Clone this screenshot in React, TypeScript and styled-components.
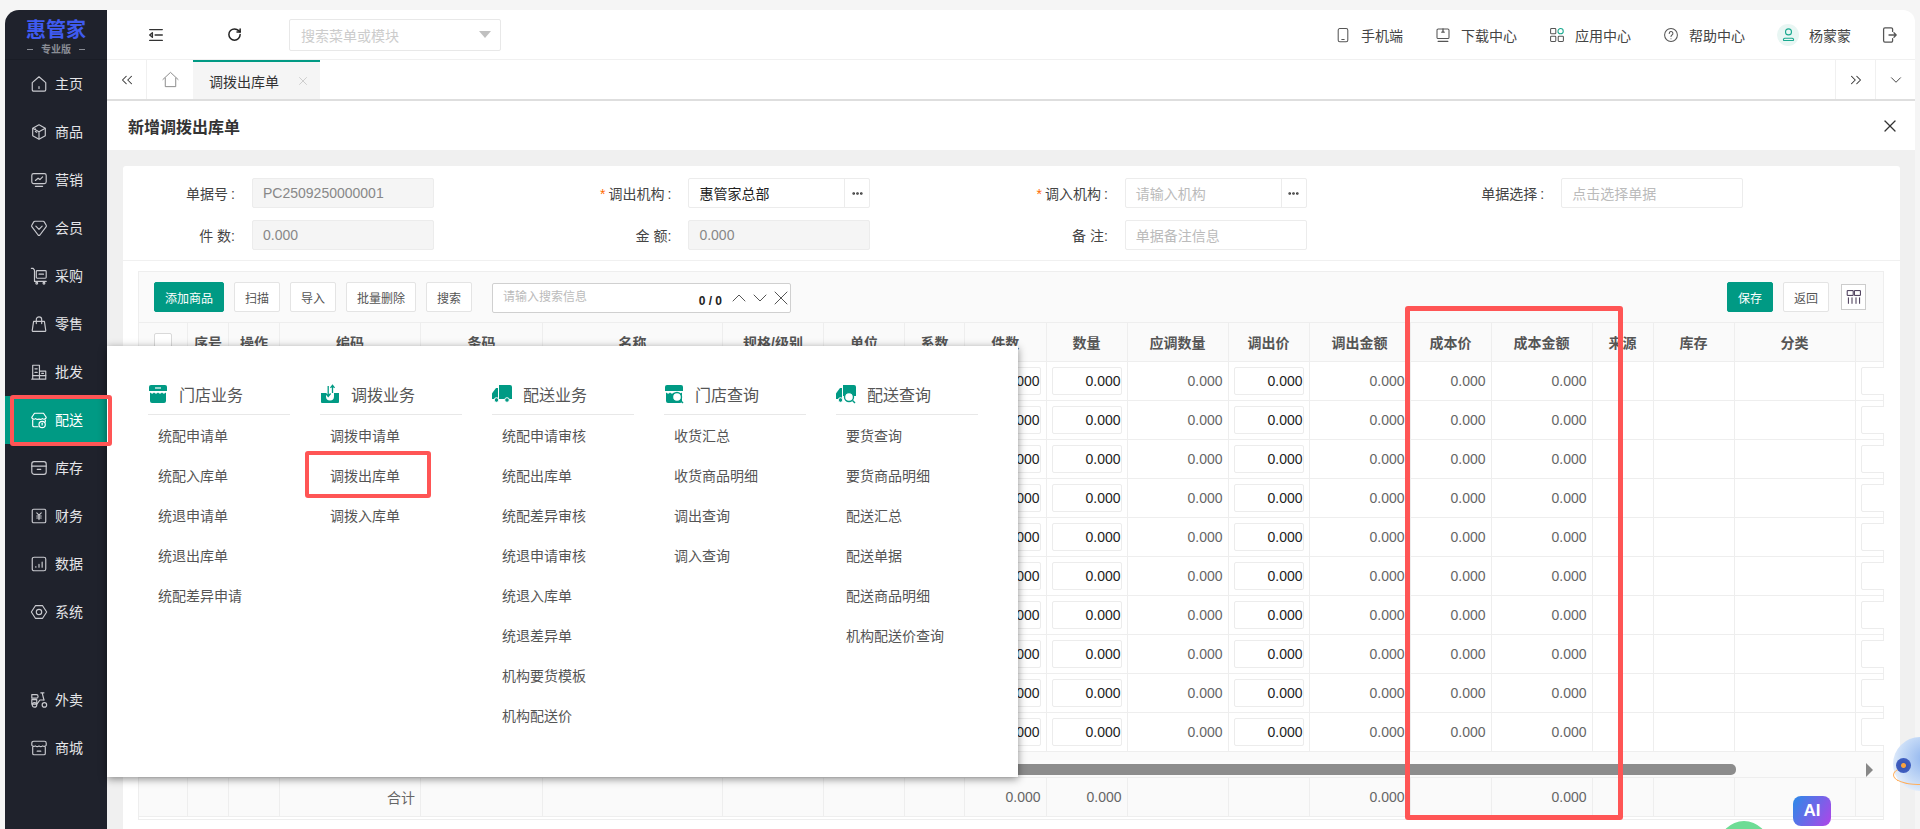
import { ReactNode } from "react";
import styled, { createGlobalStyle } from "styled-components";
import { ChevronDown, ChevronUp, ChevronsLeft, ChevronsRight, Ellipsis, RotateCw, X } from "lucide-react";

const TEAL = "#009a84";
const COLS =
  "49px 41px 51px 141px 122px 180px 101px 81px 60px 81.5px 81px 101px 81px 101px 81px 101px 61px 81px 121px 28px";

const GlobalStyle = createGlobalStyle`
  html, body { margin: 0; padding: 0; background: #f5f5f5; overflow: hidden; }
  * { box-sizing: border-box; }
  body { font-family: "Liberation Sans", "Noto Sans CJK SC", sans-serif; font-size: 14px; color: #555; }
`;

const Ico = ({ children, size = 18, color = "currentColor", width = 1.3 }: { children: ReactNode; size?: number; color?: string; width?: number }) => (
  <svg width={size} height={size} viewBox="0 0 20 20" fill="none" stroke={color} strokeWidth={width} strokeLinecap="round" strokeLinejoin="round">
    {children}
  </svg>
);

const navTop = [
  { label: "主页", icon: <><path d="M10 2l7.500 6.500v8a1.500 1.500 0 0 1-1.500 1.500H4a1.500 1.500 0 0 1-1.500-1.500v-8z" /><path d="M10 13v2" /></> },
  { label: "商品", icon: <><path d="M10 2l7 3.800v8.400l-7 3.800-7-3.800V5.800z" /><path d="M3.500 6L10 9.800 16.500 6M10 10v7.500M6 6.500v3l1.500.8" /></> },
  { label: "营销", icon: <><rect x="2" y="3" width="16" height="11" rx="2" /><path d="M6 10.500l3-2.500 2 1.500 3-3M6 17h8" /></> },
  { label: "会员", icon: <><path d="M5.500 2.500h9a1.500 1.500 0 0 1 1.300.7l2.200 3.800a1.500 1.500 0 0 1-.2 1.800L11 17.800a1.400 1.400 0 0 1-2 0L2.200 8.800A1.500 1.500 0 0 1 2 7l2.200-3.800a1.500 1.500 0 0 1 1.300-.7z" /><path d="M6.500 8L10 11.500 13.500 8" /></> },
  { label: "采购", icon: <><path d="M1.500 1.500h2l1.500 2v12.500h13" /><rect x="7" y="4" width="11" height="8.500" rx="1" /><path d="M10 8h5" /><circle cx="7.500" cy="18" r="1" /><circle cx="15.500" cy="18" r="1" /></> },
  { label: "零售", icon: <><path d="M4 7h12l1.500 10a1 1 0 0 1-1 1.200h-13a1 1 0 0 1-1-1.200z" /><path d="M7 9.500V5a3 3 0 0 1 6 0v4.500" /></> },
  { label: "批发", icon: <><path d="M3 18V2.500h7.500V18M10.500 9H17.500v9H2" /><path d="M5.500 6.500h2.500M5.500 10.500h2.500M3 14h14.500M13 11.500h2" /></> },
  { label: "配送", active: true, icon: <><path d="M5 2.500h10l3 4.500a2.600 2.600 0 0 1-4.300 1.500 3 3 0 0 1-3.700.3 3 3 0 0 1-3.700-.3A2.600 2.600 0 0 1 2 7z" /><path d="M3 10v6a1.500 1.500 0 0 0 1.500 1.500H9M17 10v2" /><circle cx="13.500" cy="15" r="3.500" /><path d="M13.500 13.500v2" /></> },
  { label: "库存", icon: <><rect x="2" y="3" width="16" height="14" rx="2.500" /><path d="M2 8h16M8 11.500h4" /></> },
  { label: "财务", icon: <><rect x="2.500" y="2.500" width="15" height="15" rx="1.500" /><path d="M7.500 6.500L10 9l2.500-2.500M10 9v5M7.500 10h5M7.500 12.200h5" /></> },
  { label: "数据", icon: <><rect x="2.500" y="2.500" width="15" height="15" rx="2" /><path d="M6.500 13.500v-.5M10 13.500v-3M13.500 13.500V8" /></> },
  { label: "系统", icon: <><path d="M6 3h8l4.500 7-4.500 7H6l-4.500-7z" /><circle cx="10" cy="10" r="3" /></> },
];

const navBottom = [
  { label: "外卖", icon: <><path d="M2 4h5a1.500 1.500 0 0 1 0 4H2zM2 9.500h5.500v5H2zM12 2h3.500M13.500 2l2 8" /><path d="M8 14l3-4h4.500" /><circle cx="5" cy="15.500" r="2.500" /><circle cx="16" cy="15.500" r="2.500" /></> },
  { label: "商城", icon: <><path d="M4 2.500h12a2 2 0 0 1 2 2V7a2.700 2.700 0 0 1-4 .6 3 3 0 0 1-4 0 3 3 0 0 1-4 0A2.700 2.700 0 0 1 2 7V4.500a2 2 0 0 1 2-2z" /><path d="M3 9v7a1.500 1.500 0 0 0 1.500 1.500h11A1.500 1.500 0 0 0 17 16V9M8 13.500h4" /></> },
];

const headerLinks = [
  { label: "手机端", icon: <><rect x="4" y="2" width="12" height="16.500" rx="2" /><path d="M8.500 15.500h3" /></> },
  { label: "下载中心", icon: <><rect x="2.500" y="2.500" width="15" height="12" rx="1.500" /><path d="M10 2.500v4M8.500 6.500h3M4 18h12" strokeWidth="1.600" /></> },
  { label: "应用中心", icon: <><rect x="2" y="2" width="6.500" height="6.500" rx="1" /><circle cx="14.500" cy="5.200" r="3.300" stroke="#19a98f" /><rect x="2" y="11.500" width="6.500" height="6.500" rx="1" /><rect x="11.500" y="11.500" width="6.500" height="6.500" rx="1" /></> },
  { label: "帮助中心", icon: <><circle cx="10" cy="10" r="8" /><path d="M7.800 8a2.300 2.300 0 1 1 3.400 2c-.8.500-1.200 1-1.200 2M10 14.600v.1" /></> },
];

const menus = [
  {
    title: "门店业务",
    icon: (
      <>
        <path d="M3 1h14a2 2 0 0 1 2 2v4H1V3a2 2 0 0 1 2-2z" />
        <path d="M2 8.500c1.500 1.500 3 1.500 4 0 1 1.500 3 1.500 4 0 1 1.500 3 1.500 4 0 1 1.500 2.500 1.500 4 0V17a2 2 0 0 1-2 2H4a2 2 0 0 1-2-2z" />
        <path d="M7 4h6" stroke="#fff" strokeWidth="1.200" />
      </>
    ),
    items: ["统配申请单", "统配入库单", "统退申请单", "统退出库单", "统配差异申请"],
  },
  {
    title: "调拨业务",
    icon: (
      <>
        <path d="M1 9h5v3.500a4 4 0 0 0 8 0V9h5v9a1 1 0 0 1-1 1H2a1 1 0 0 1-1-1z" />
        <path d="M8.200 11.500V2M5.800 9.500l2.400 3 2.400-3M12.500 9V1.500M10.500 3.800l2-2.600 2 2.600" fill="none" stroke={TEAL} strokeWidth="1.300" />
      </>
    ),
    items: ["调拨申请单", "调拨出库单", "调拨入库单"],
  },
  {
    title: "配送业务",
    icon: (
      <>
        <path d="M7 1h11a2 2 0 0 1 2 2v12H7zM1 8l3-4h2v11H0V9.500z" />
        <circle cx="4.500" cy="16" r="2.300" stroke="#fff" />
        <circle cx="15" cy="16" r="2.300" stroke="#fff" />
      </>
    ),
    items: ["统配申请审核", "统配出库单", "统配差异审核", "统退申请审核", "统退入库单", "统退差异单", "机构要货模板", "机构配送价"],
  },
  {
    title: "门店查询",
    icon: (
      <>
        <path d="M3 1h14a2 2 0 0 1 2 2v4H1V3a2 2 0 0 1 2-2z" />
        <path d="M2 8.500c1.500 1.500 3 1.500 4 0 1 1.500 3 1.500 4 0 1 1.500 3 1.500 4 0 1 1.500 2.500 1.500 4 0V17a2 2 0 0 1-2 2H4a2 2 0 0 1-2-2z" />
        <circle cx="13" cy="13" r="4.500" fill="#fff" stroke={TEAL} strokeWidth="1.400" />
        <path d="M16.500 16.500l2.500 2.500" stroke={TEAL} strokeWidth="1.400" />
      </>
    ),
    items: ["收货汇总", "收货商品明细", "调出查询", "调入查询"],
  },
  {
    title: "配送查询",
    icon: (
      <>
        <path d="M7 1h11a2 2 0 0 1 2 2v9H7zM1 8l3-4h2v11H0V9.500z" />
        <circle cx="4.500" cy="16" r="2.300" stroke="#fff" />
        <circle cx="13" cy="13" r="4.500" fill="#fff" stroke={TEAL} strokeWidth="1.400" />
        <path d="M16.500 16.500l2.500 2.500" stroke={TEAL} strokeWidth="1.400" />
      </>
    ),
    items: ["要货查询", "要货商品明细", "配送汇总", "配送单据", "配送商品明细", "机构配送价查询"],
  },
];

const columns = ["", "序号", "操作", "编码", "条码", "名称", "规格/级别", "单位", "系数", "件数", "数量", "应调数量", "调出价", "调出金额", "成本价", "成本金额", "来源", "库存", "分类", ""];
const inputCols = [9, 10, 12, 19];
const numberCols = [11, 13, 14, 15];
const totalCols = [9, 10, 13, 15];

export default function App() {
  return (
    <Page>
      <GlobalStyle />
      <Sidebar>
        <Logo>
          <LogoName>惠管家</LogoName>
          <LogoSub>专业版</LogoSub>
        </Logo>
        <NavGroup>
          {navTop.map((n) => (
            <NavItem key={n.label} $active={!!n.active}>
              <Ico size={18}>{n.icon}</Ico>
              <span>{n.label}</span>
            </NavItem>
          ))}
        </NavGroup>
        <NavGroup>
          {navBottom.map((n) => (
            <NavItem key={n.label}>
              <Ico size={18}>{n.icon}</Ico>
              <span>{n.label}</span>
            </NavItem>
          ))}
        </NavGroup>
      </Sidebar>

      <Main>
        <Header>
          <HeaderLeft>
            <IconSlot>
              <Ico size={18} color="#333" width={1.5}>
                <path d="M3 4h14M9 10h8M3 16h14M6 7.500L3 10l3 2.500z" />
              </Ico>
            </IconSlot>
            <IconSlot>
              <RotateCw size={15} color="#222" strokeWidth={2.4} />
            </IconSlot>
            <MenuSearch>
              搜索菜单或模块
              <Caret />
            </MenuSearch>
          </HeaderLeft>
          <HeaderRight>
            {headerLinks.map((h) => (
              <HeaderLink key={h.label}>
                <Ico size={16} color="#555">{h.icon}</Ico>
                {h.label}
              </HeaderLink>
            ))}
            <HeaderLink>
              <Avatar>
                <Ico size={15} color="#19a98f" width={1.4}>
                  <circle cx="10" cy="6.500" r="4" />
                  <path d="M3.500 18a2 2 0 0 1 2-3h9a2 2 0 0 1 2 3z" />
                </Ico>
              </Avatar>
              杨蒙蒙
            </HeaderLink>
            <Logout>
              <Ico size={18} color="#555" width={1.4}>
                <path d="M14 6V3.500A1.500 1.500 0 0 0 12.500 2h-7A1.500 1.500 0 0 0 4 3.500v13A1.500 1.500 0 0 0 5.500 18h7a1.500 1.500 0 0 0 1.500-1.500V14M10 10h8M15.500 7.500L18 10l-2.500 2.500" />
              </Ico>
            </Logout>
          </HeaderRight>
        </Header>

        <TabBar>
          <TabArrow>
            <ChevronsLeft size={18} color="#333" strokeWidth={1.4} />
          </TabArrow>
          <HomeTab>
            <Ico size={19} color="#888" width={1}>
              <path d="M2 10l8-7.500 8 7.500M4.500 8.500V17.500h11V8.500" />
            </Ico>
          </HomeTab>
          <ActiveTab>
            调拨出库单
            <X size={14} color="#c8c8c8" strokeWidth={1.5} />
          </ActiveTab>
          <TabSpacer />
          <TabEnd>
            <ChevronsRight size={18} color="#333" strokeWidth={1.4} />
          </TabEnd>
          <TabEnd>
            <ChevronDown size={18} color="#444" strokeWidth={1.3} />
          </TabEnd>
        </TabBar>

        <TitleBar>
          新增调拨出库单
          <X size={20} color="#333" strokeWidth={1.5} />
        </TitleBar>

        <Content>
          <Card>
            <FormGrid>
              <Field>
                <FieldLabel>单据号<Colon>:</Colon></FieldLabel>
                <TextBox $disabled>PC2509250000001</TextBox>
              </Field>
              <Field>
                <FieldLabel><Star>*</Star>调出机构<Colon>:</Colon></FieldLabel>
                <TextBox $dark>
                  惠管家总部
                  <MoreBtn><Ellipsis size={13} color="#333" strokeWidth={3} /></MoreBtn>
                </TextBox>
              </Field>
              <Field>
                <FieldLabel><Star>*</Star>调入机构<Colon>:</Colon></FieldLabel>
                <TextBox $hint>
                  请输入机构
                  <MoreBtn><Ellipsis size={13} color="#333" strokeWidth={3} /></MoreBtn>
                </TextBox>
              </Field>
              <Field>
                <FieldLabel>单据选择<Colon>:</Colon></FieldLabel>
                <TextBox $hint>点击选择单据</TextBox>
              </Field>
              <Field>
                <FieldLabel>件 数:</FieldLabel>
                <TextBox $disabled>0.000</TextBox>
              </Field>
              <Field>
                <FieldLabel>金 额:</FieldLabel>
                <TextBox $disabled>0.000</TextBox>
              </Field>
              <Field>
                <FieldLabel>备 注:</FieldLabel>
                <TextBox $hint>单据备注信息</TextBox>
              </Field>
            </FormGrid>

            <TableWrap>
              <Toolbar>
                <ToolGroup>
                  <ToolBtn $primary $w={70}>添加商品</ToolBtn>
                  <ToolBtn $w={46}>扫描</ToolBtn>
                  <ToolBtn $w={46}>导入</ToolBtn>
                  <ToolBtn $w={70}>批量删除</ToolBtn>
                  <ToolBtn $w={46}>搜索</ToolBtn>
                  <SearchBox>
                    <SearchHint>请输入搜索信息</SearchHint>
                    <SearchCount>0 / 0</SearchCount>
                    <ChevronUp size={24} color="#555" strokeWidth={1} />
                    <ChevronDown size={24} color="#555" strokeWidth={1} />
                    <X size={24} color="#555" strokeWidth={1} />
                  </SearchBox>
                </ToolGroup>
                <ToolGroup>
                  <ToolBtn $primary $w={46}>保存</ToolBtn>
                  <ToolBtn $w={46}>返回</ToolBtn>
                  <ColumnBtn>
                    <Ico size={16} color="#3a2a4a" width={1.2}>
                      <rect x="2" y="2" width="7" height="6" />
                      <rect x="11" y="2" width="7" height="6" />
                      <path d="M3 11v7M7.500 11v7M12.500 11v7M17 11v7" />
                    </Ico>
                  </ColumnBtn>
                </ToolGroup>
              </Toolbar>

              <HeadRow>
                {columns.map((c, i) => (
                  <HeadCell key={i}>{i === 0 ? <CheckBox /> : c}</HeadCell>
                ))}
              </HeadRow>

              {Array.from({ length: 10 }).map((_, r) => (
                <BodyRow key={r}>
                  {columns.map((_c, i) => (
                    <BodyCell key={i}>
                      {inputCols.includes(i) ? (
                        <NumInput>{i === 19 ? "" : "0.000"}</NumInput>
                      ) : numberCols.includes(i) ? (
                        "0.000"
                      ) : null}
                    </BodyCell>
                  ))}
                </BodyRow>
              ))}

              <ScrollTrack>
                <ScrollThumb />
                <ScrollArrow />
              </ScrollTrack>

              <TotalRow>
                {columns.map((_c, i) => (
                  <TotalCell key={i}>
                    {i === 3 ? "合计" : totalCols.includes(i) ? "0.000" : null}
                  </TotalCell>
                ))}
              </TotalRow>
            </TableWrap>
          </Card>
        </Content>
      </Main>

      <Popup>
        {menus.map((m) => (
          <MenuColumn key={m.title}>
            <MenuHead>
              <svg width="20" height="20" viewBox="0 0 20 20" fill={TEAL}>{m.icon}</svg>
              {m.title}
            </MenuHead>
            {m.items.map((item) => (
              <MenuItem key={item}>{item}</MenuItem>
            ))}
          </MenuColumn>
        ))}
      </Popup>

      <RedBox $x={10} $y={395} $w={102} $h={51} $b={4} />
      <RedBox $x={305} $y={451} $w={126} $h={47} $b={4} />
      <RedBox $x={1405} $y={306} $w={218} $h={514} $b={5} />

      <AiBadge>AI</AiBadge>
      <GreenDot />
      <Robot>
        <RobotRing />
        <RobotEye />
      </Robot>
    </Page>
  );
}

const Page = styled.div`
  position: relative;
  width: 1920px;
  height: 829px;
  padding: 10px 5px 0;
  display: flex;
  overflow: hidden;
  background: #f5f5f5;
`;

const Sidebar = styled.aside`
  width: 102px;
  flex: none;
  background: #1f222c;
  border-top-left-radius: 14px;
  display: flex;
  flex-direction: column;
  gap: 40px;
`;

const Logo = styled.div`
  height: 50px;
  display: flex;
  flex-direction: column;
  align-items: center;
  padding-top: 9px;
  margin-bottom: -40px;
  border-bottom: 1px solid #1a1d26;
`;

const LogoName = styled.div`
  color: #3f5bf0;
  font-size: 20px;
  line-height: 22px;
  font-weight: 700;
`;

const LogoSub = styled.div`
  width: 58px;
  display: flex;
  align-items: center;
  justify-content: space-between;
  color: #8a8d95;
  font-size: 10px;
  line-height: 13px;
  font-weight: 700;
  margin-top: 2px;

  &::before,
  &::after {
    content: "";
    width: 6px;
    height: 1px;
    background: #8a8d95;
  }
`;

const NavGroup = styled.nav`
  display: flex;
  flex-direction: column;
`;

const NavItem = styled.div<{ $active?: boolean }>`
  height: 48px;
  padding-left: 25px;
  display: flex;
  align-items: center;
  gap: 7px;
  color: ${({ $active }) => ($active ? "#fff" : "#e4e5e8")};
  background: ${({ $active }) => ($active ? TEAL : "transparent")};
  font-size: 14px;
  svg {
    color: ${({ $active }) => ($active ? "#fff" : "#c9cacf")};
  }
  span {
    margin-top: -2px;
  }
`;

const Main = styled.main`
  flex: 1;
  min-width: 0;
  display: flex;
  flex-direction: column;
  background: #fff;
  border-top-right-radius: 12px;
`;

const Header = styled.header`
  height: 50px;
  flex: none;
  display: flex;
  align-items: center;
  justify-content: space-between;
  padding-right: 17px;
  border-bottom: 1px solid #f0f0f0;
`;

const HeaderLeft = styled.div`
  display: flex;
  align-items: center;
`;

const IconSlot = styled.div`
  width: 78px;
  display: flex;
  justify-content: center;
  &:first-child {
    margin-left: 10px;
  }
`;

const MenuSearch = styled.div`
  width: 212px;
  height: 32px;
  margin-left: 16px;
  padding: 0 9px 0 11px;
  display: flex;
  align-items: center;
  justify-content: space-between;
  border: 1px solid #e8e8e8;
  border-radius: 2px;
  color: #cccccc;
  font-size: 14px;
`;

const Caret = styled.i`
  width: 0;
  height: 0;
  border-left: 6px solid transparent;
  border-right: 6px solid transparent;
  border-top: 7px solid #c0c0c0;
`;

const HeaderRight = styled.div`
  display: flex;
  align-items: center;
  gap: 32px;
`;

const HeaderLink = styled.div`
  display: flex;
  align-items: center;
  gap: 10px;
  color: #444;
  font-size: 14px;
`;

const Avatar = styled.span`
  width: 22px;
  height: 22px;
  border-radius: 50%;
  background: #e8f6f3;
  display: flex;
  align-items: center;
  justify-content: center;
`;

const Logout = styled.span`
  display: flex;
  margin-left: -3px;
`;

const TabBar = styled.div`
  height: 41px;
  flex: none;
  display: flex;
  border-bottom: 2px solid #dedede;
`;

const TabArrow = styled.div`
  width: 40px;
  display: flex;
  align-items: center;
  justify-content: center;
  border-right: 1px solid #f0f0f0;
`;

const HomeTab = styled.div`
  width: 46px;
  display: flex;
  align-items: center;
  justify-content: center;
`;

const ActiveTab = styled.div`
  width: 127px;
  padding: 0 10px 0 16px;
  display: flex;
  align-items: center;
  justify-content: space-between;
  background: #f5f5f5;
  border-top: 2px solid ${TEAL};
  color: #333;
  font-size: 14px;
`;

const TabSpacer = styled.div`
  flex: 1;
`;

const TabEnd = styled.div`
  width: 40px;
  display: flex;
  align-items: center;
  justify-content: center;
  border-left: 1px solid #f0f0f0;
`;

const TitleBar = styled.div`
  height: 49px;
  flex: none;
  padding: 0 15px 0 21px;
  display: flex;
  align-items: center;
  justify-content: space-between;
  color: #333;
  font-size: 16px;
  font-weight: 700;
`;

const Content = styled.div`
  flex: 1;
  min-height: 0;
  padding: 16px 15px 0 16px;
  background: #f0f0f0;
`;

const Card = styled.section`
  height: 100%;
  background: #fff;
  border-radius: 3px 3px 0 0;
`;

const FormGrid = styled.div`
  padding: 12px 0 10px;
  display: grid;
  grid-template-columns: repeat(4, 436.4px);
  grid-auto-rows: 30px;
  row-gap: 12px;
  border-bottom: 1px solid #f0f0f0;
`;

const Field = styled.div`
  display: flex;
  align-items: center;
`;

const FieldLabel = styled.label`
  width: 112px;
  margin-right: 17px;
  flex: none;
  text-align: right;
  color: #444;
  font-size: 14px;
`;

const Colon = styled.span`
  margin-left: 3px;
`;

const Star = styled.span`
  color: #ff6a00;
  margin-right: 3px;
`;

const TextBox = styled.div<{ $disabled?: boolean; $hint?: boolean; $dark?: boolean }>`
  position: relative;
  width: 182px;
  height: 30px;
  padding-left: 10px;
  display: flex;
  align-items: center;
  border: 1px solid #ececec;
  border-radius: 2px;
  font-size: 14px;
  background: ${({ $disabled }) => ($disabled ? "#f5f5f5" : "#fff")};
  color: ${({ $disabled, $hint, $dark }) => ($dark ? "#222" : $hint ? "#bbb" : $disabled ? "#888" : "#555")};
`;

const MoreBtn = styled.span`
  margin-left: auto;
  width: 25px;
  height: 100%;
  display: flex;
  align-items: center;
  justify-content: center;
  border-left: 1px solid #ececec;
`;

const TableWrap = styled.div`
  margin: 10px 16px 0 15px;
  padding-bottom: 2px;
  border: 1px solid #eee;
`;

const Toolbar = styled.div`
  height: 51px;
  padding: 0 17px 0 15px;
  display: flex;
  align-items: center;
  justify-content: space-between;
  background: #fafafa;
  border-bottom: 1px solid #eee;
`;

const ToolGroup = styled.div`
  display: flex;
  align-items: center;
  gap: 10px;
`;

const ToolBtn = styled.button<{ $primary?: boolean; $w: number }>`
  width: ${({ $w }) => $w}px;
  height: 30px;
  padding: 0;
  border: 1px solid ${({ $primary }) => ($primary ? TEAL : "#e4e4e4")};
  border-radius: 2px;
  background: ${({ $primary }) => ($primary ? TEAL : "#fff")};
  color: ${({ $primary }) => ($primary ? "#fff" : "#555")};
  font-family: inherit;
  font-size: 12px;
`;

const SearchBox = styled.div`
  width: 299px;
  height: 30px;
  margin: 2px 0 0 10px;
  padding: 0 0 0 10px;
  display: flex;
  align-items: center;
  border: 1px solid #d0d0d0;
  border-radius: 2px;
  background: #fff;

  svg {
    flex: none;
    margin-left: -3px;
  }
  svg:last-child {
    margin-right: -3px;
  }
`;

const SearchHint = styled.span`
  flex: 1;
  margin-top: -6px;
  color: #bbb;
  font-size: 12px;
`;

const SearchCount = styled.span`
  margin: 5px 8px 0 0;
  color: #222;
  font-size: 12px;
  font-weight: 700;
`;

const ColumnBtn = styled.div`
  width: 25px;
  height: 26px;
  margin-left: 2px;
  display: flex;
  align-items: center;
  justify-content: center;
  border: 1px solid #ccc;
  background: #fff;
`;

const HeadRow = styled.div`
  height: 39px;
  display: grid;
  grid-template-columns: ${COLS};
  background: #fafafa;
`;

const HeadCell = styled.div`
  display: flex;
  align-items: center;
  justify-content: center;
  padding-bottom: 1px;
  border-right: 1px solid #eee;
  border-bottom: 1px solid #eee;
  color: #555;
  font-size: 14px;
  font-weight: 700;
  white-space: nowrap;
  overflow: hidden;
`;

const CheckBox = styled.span`
  width: 18px;
  height: 18px;
  border: 1px solid #d9d9d9;
  border-radius: 2px;
  background: #fff;
`;

const BodyRow = styled.div`
  height: 39px;
  display: grid;
  grid-template-columns: ${COLS};
`;

const BodyCell = styled.div`
  display: flex;
  align-items: center;
  justify-content: flex-end;
  padding: 0 5px;
  border-right: 1px solid #eee;
  border-bottom: 1px solid #eee;
  color: #666;
  font-size: 14px;
  overflow: hidden;

  &:last-child {
    padding-right: 0;
    border-right: 0;
    justify-content: flex-start;
  }
`;

const NumInput = styled.div`
  flex: none;
  width: 70px;
  height: 28px;
  display: flex;
  align-items: center;
  justify-content: flex-end;
  border: 1px solid #ececec;
  border-radius: 2px;
  background: #fff;
  color: #222;
  font-size: 14px;
`;

const ScrollTrack = styled.div`
  height: 26px;
  padding: 10px 10px 0 12px;
  display: flex;
  align-items: center;
  justify-content: space-between;
  background: #fafafa;
  border-bottom: 1px solid #eee;
`;

const ScrollThumb = styled.div`
  width: 1585px;
  height: 11px;
  border-radius: 5px;
  background: #8c8c8c;
`;

const ScrollArrow = styled.i`
  width: 0;
  height: 0;
  border-top: 7px solid transparent;
  border-bottom: 7px solid transparent;
  border-left: 7px solid #888;
`;

const TotalRow = styled.div`
  height: 39px;
  display: grid;
  grid-template-columns: ${COLS};
  background: #fafafa;
`;

const TotalCell = styled.div`
  display: flex;
  align-items: center;
  justify-content: flex-end;
  padding-right: 5px;
  border-right: 1px solid #eee;
  border-bottom: 1px solid #eee;
  color: #666;
  font-size: 14px;
`;

const Popup = styled.div`
  position: absolute;
  left: 107px;
  top: 346px;
  width: 911px;
  height: 431px;
  padding: 29px 0 0 41px;
  display: flex;
  gap: 30px;
  background: #fff;
  box-shadow: 0 2px 8px rgba(0, 0, 0, 0.45);
`;

const MenuColumn = styled.div`
  width: 142px;
`;

const MenuHead = styled.div`
  height: 40px;
  padding-bottom: 2px;
  display: flex;
  align-items: center;
  gap: 11px;
  border-bottom: 1px solid #e8e8e8;
  color: #555;
  font-size: 16px;
`;

const MenuItem = styled.div`
  height: 40px;
  padding-left: 10px;
  display: flex;
  align-items: center;
  color: #555;
  font-size: 14px;
  white-space: nowrap;
`;

const RedBox = styled.div<{ $x: number; $y: number; $w: number; $h: number; $b: number }>`
  position: absolute;
  left: ${({ $x }) => $x}px;
  top: ${({ $y }) => $y}px;
  width: ${({ $w }) => $w}px;
  height: ${({ $h }) => $h}px;
  border: ${({ $b }) => $b}px solid #ff5555;
  border-radius: 3px;
  pointer-events: none;
`;

const AiBadge = styled.div`
  position: absolute;
  left: 1793px;
  top: 796px;
  width: 38px;
  height: 30px;
  display: flex;
  align-items: center;
  justify-content: center;
  border-radius: 8px;
  background: linear-gradient(120deg, #2a8be8, #b044e8);
  color: #fff;
  font-size: 17px;
  font-weight: 700;
`;

const GreenDot = styled.div`
  position: absolute;
  left: 1719px;
  top: 821px;
  width: 50px;
  height: 50px;
  border-radius: 50%;
  background: #6edc95;
`;

const Robot = styled.div`
  position: absolute;
  left: 1893px;
  top: 737px;
  width: 54px;
  height: 54px;
  border-radius: 50%;
  background: radial-gradient(circle at 60% 40%, #8fb4ee 0%, #c8dcf7 55%, #f2f7fe 85%, rgba(255, 255, 255, 0.6) 100%);
`;

const RobotRing = styled.div`
  position: absolute;
  left: 0;
  top: 28px;
  width: 50px;
  height: 20px;
  border: 1px solid #ffae5c;
  border-top-color: transparent;
  border-radius: 50%;
`;

const RobotEye = styled.div`
  position: absolute;
  left: 3px;
  top: 21px;
  width: 15px;
  height: 15px;
  border-radius: 50%;
  background: radial-gradient(circle, #f7a13f 0 2px, #3a56b5 3px, #4466c9 100%);
`;
